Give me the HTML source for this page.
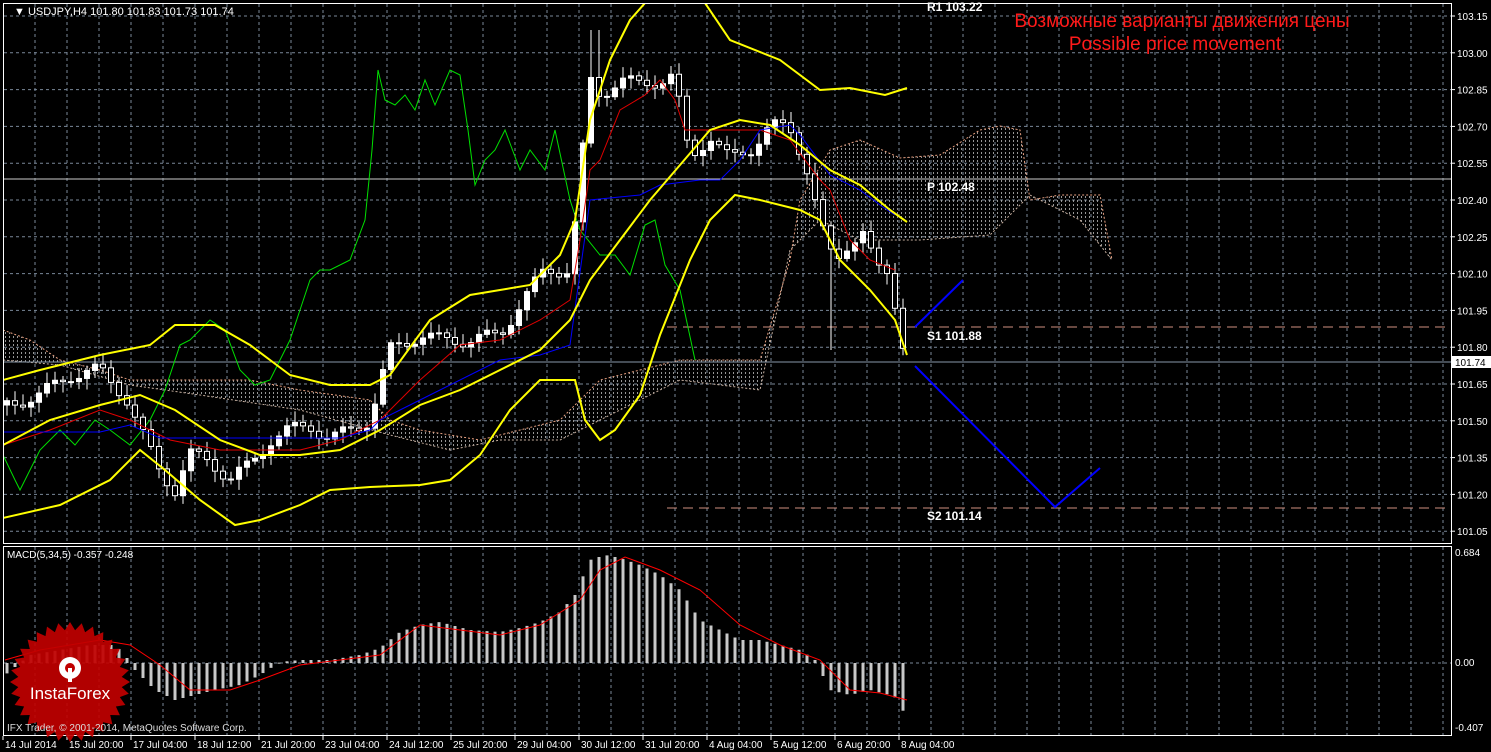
<!DOCTYPE html><html><head><meta charset="utf-8"><style>
html,body{margin:0;padding:0;background:#000;width:1491px;height:752px;overflow:hidden}
svg{display:block}
text{font-family:"Liberation Sans",sans-serif}
</style></head><body>
<svg id="s" width="1491" height="752" xmlns="http://www.w3.org/2000/svg">
<defs>
<pattern id="hatch" width="4" height="4" patternUnits="userSpaceOnUse"><rect x="1" y="0" width="1" height="2" fill="#bbb"/></pattern>
<clipPath id="mc"><rect x="4" y="4" width="1447" height="538"/></clipPath>
<clipPath id="dc"><rect x="4" y="547" width="1447" height="187"/></clipPath>
</defs>
<g id="grid"></g>
<g id="main" clip-path="url(#mc)"></g>
<g id="macd" clip-path="url(#dc)"></g>
<rect x="3.5" y="3.5" width="1448" height="540" fill="none" stroke="#fff"/>
<rect x="3.5" y="546.5" width="1448" height="189" fill="none" stroke="#fff"/>
<g id="axis" font-size="10" fill="#fff"></g>
<text x="14" y="15" font-size="11" fill="#fff">▼ USDJPY,H4  101.80 101.83 101.73 101.74</text>
<text x="7" y="558" font-size="10" fill="#fff">MACD(5,34,5) -0.357 -0.248</text>
<text x="1182" y="27" font-size="19" fill="#ff1a1a" text-anchor="middle">Возможные варианты движения цены</text>
<text x="1175" y="50" font-size="19" fill="#ff1a1a" text-anchor="middle">Possible price movement</text>
<g font-family="Liberation Mono,monospace" font-size="12" font-weight="bold" fill="#fff">
<text x="927" y="11" font-family="Liberation Mono,monospace">R1 103.22</text>
<text x="927" y="191" font-family="Liberation Mono,monospace">P 102.48</text>
<text x="927" y="340" font-family="Liberation Mono,monospace">S1 101.88</text>
<text x="927" y="520" font-family="Liberation Mono,monospace">S2 101.14</text>
</g>
<g id="logo">
<polygon id="star" fill="#c00000" opacity="0.92"/>
<g transform="translate(70,668)" fill="#fff">
<circle r="11"/><circle r="5" fill="#c00000"/>
<rect x="-2" y="0" width="4" height="14" fill="#fff"/>
</g>
<text x="70" y="699" font-size="17" fill="#fff" text-anchor="middle">InstaForex</text>
</g>
<text x="7" y="731" font-size="10" fill="#ddd">IFX Trader, © 2001-2014, MetaQuotes Software Corp.</text>
</svg>
<script>
var NS="http://www.w3.org/2000/svg";
function el(p,t,a){var e=document.createElementNS(NS,t);for(var k in a)e.setAttribute(k,a[k]);p.appendChild(e);return e;}
function I(k,x){if(x<=k[0][0])return k[0][1];for(var i=1;i<k.length;i++){if(x<=k[i][0]){var a=k[i-1],b=k[i];return a[1]+(b[1]-a[1])*(x-a[0])/(b[0]-a[0]);}}return k[k.length-1][1];}
function pl(p,k,c,w,d){el(p,"polyline",{points:k.map(function(q){return q.join(",")}).join(" "),fill:"none",stroke:c,"stroke-width":w||1,"stroke-dasharray":d||""});}
var G=document.getElementById("grid"),M=document.getElementById("main"),D=document.getElementById("macd"),A=document.getElementById("axis");
var gc="#7a8899";
for(var x=35;x<1450;x+=32){el(G,"line",{x1:x,y1:4,x2:x,y2:543,stroke:gc,"stroke-dasharray":"3,3"});el(G,"line",{x1:x,y1:547,x2:x,y2:735,stroke:gc,"stroke-dasharray":"3,3"});}
var pr=["103.15","103.00","102.85","102.70","102.55","102.40","102.25","102.10","101.95","101.80","101.65","101.50","101.35","101.20","101.05"];
for(var i=0;i<15;i++){var y=16+i*36.8;el(G,"line",{x1:4,y1:y,x2:1451,y2:y,stroke:gc,"stroke-dasharray":"3,3"});el(A,"line",{x1:1452,y1:y,x2:1455,y2:y,stroke:"#fff"});var t=el(A,"text",{x:1457,y:y+4});t.textContent=pr[i];}
el(G,"line",{x1:4,y1:663,x2:1451,y2:663,stroke:gc,"stroke-dasharray":"3,3"});
[["0.684",556],["0.00",666],["-0.407",731]].forEach(function(a){var t=el(A,"text",{x:1455,y:a[1]});t.textContent=a[0];});
el(A,"rect",{x:1452,y:356,width:39,height:12,fill:"#fff"});var t=el(A,"text",{x:1455,y:366,fill:"#000"});t.textContent="101.74";
var tl=["14 Jul 2014","15 Jul 20:00","17 Jul 04:00","18 Jul 12:00","21 Jul 20:00","23 Jul 04:00","24 Jul 12:00","25 Jul 20:00","29 Jul 04:00","30 Jul 12:00","31 Jul 20:00","4 Aug 04:00","5 Aug 12:00","6 Aug 20:00","8 Aug 04:00"];
tl.forEach(function(s,i){var x=3+64*i;el(A,"line",{x1:x,y1:736,x2:x,y2:740,stroke:"#fff"});var t=el(A,"text",{x:x+2,y:748});t.textContent=s;});
// cloud
var cu=[[3,330],[30,340],[60,360],[100,370],[130,380],[250,380],[300,390],[370,400],[390,420],[420,430],[480,440],[520,430],[560,420],[600,380],[640,370],[680,360],[760,360],[790,260],[800,200],[830,150],[860,140],[900,158],[940,155],[980,130],[1000,126],[1020,130],[1030,200],[1060,195],[1100,195],[1112,260]];
var cl=[[3,360],[60,365],[130,385],[200,395],[300,410],[390,435],[450,450],[500,440],[560,440],[600,420],[640,400],[680,380],[760,390],[790,250],[820,220],[860,240],[920,240],[990,235],[1030,195],[1080,220],[1112,260]];
el(M,"polygon",{points:cu.concat(cl.slice().reverse()).map(function(q){return q.join(",")}).join(" "),fill:"url(#hatch)",opacity:"0.8"});
pl(M,cu,"#e8a080",1,"2,2");pl(M,cl,"#c8b0a0",1,"2,2");
// levels
el(M,"line",{x1:4,y1:179,x2:1451,y2:179,stroke:"#ccc"});
el(M,"line",{x1:4,y1:362,x2:1451,y2:362,stroke:"#8899aa"});
el(M,"line",{x1:667,y1:327,x2:1451,y2:327,stroke:"#d09080","stroke-dasharray":"10,6"});
el(M,"line",{x1:667,y1:508,x2:1451,y2:508,stroke:"#d09080","stroke-dasharray":"10,6"});
// green
pl(M,[[3,455],[15,480],[20,490],[40,450],[60,430],[75,445],[95,420],[110,430],[130,445],[150,420],[165,390],[180,345],[190,340],[210,320],[225,330],[240,370],[255,385],[270,380],[290,340],[300,310],[310,280],[320,270],[330,270],[350,260],[365,220],[372,150],[378,70],[385,100],[395,105],[405,95],[415,110],[425,80],[435,105],[450,70],[460,75],[468,130],[475,185],[485,160],[495,150],[505,130],[520,170],[530,150],[545,170],[555,130],[570,200],[580,230],[600,255],[615,255],[630,275],[645,225],[655,220],[665,265],[680,290],[695,360]],"#00e000");
// candles
var ck=[[7,405],[40,395],[70,375],[100,370],[125,395],[140,430],[160,470],[175,490],[190,455],[210,460],[230,480],[250,465],[270,440],[290,430],[310,425],[330,440],[350,430],[370,420],[390,350],[420,335],[440,340],[470,340],[500,335],[520,305],[545,270],[570,270],[580,180],[590,80],[600,95],[620,80],[640,85],[660,80],[675,75],[680,110],[690,160],[710,135],[730,160],[750,150],[770,125],[790,130],[805,160],[815,200],[825,240],[835,265],[850,240],[865,230],[875,270],[890,275],[900,330],[907,358]];
var prev=I(ck,0);
for(var x=7;x<=907;x+=8){var c=I(ck,x)+Math.sin(x*1.7)*7;if(x==907)c=358;var o=prev;var hi=Math.min(o,c)-3-Math.abs(Math.sin(x*0.9))*8,lo=Math.max(o,c)+3+Math.abs(Math.cos(x*1.3))*8;
if(x>590&&x<600)hi=30;if(x>825&&x<835)lo=350;
el(M,"line",{x1:x,y1:hi,x2:x,y2:lo,stroke:"#fff"});
var up=c<o;el(M,"rect",{x:x-2.5,y:Math.min(o,c),width:5,height:Math.max(1,Math.abs(o-c)),fill:up?"#fff":"#000",stroke:"#fff","stroke-width":1});prev=c;}
// ichimoku lines
pl(M,[[3,445],[50,430],[100,410],[130,420],[170,440],[220,450],[300,450],[340,440],[380,420],[420,380],[460,345],[500,340],[540,320],[570,300],[580,240],[590,170],[600,160],[620,110],[645,95],[660,80],[675,100],[685,130],[740,130],[760,130],[790,140],[820,180],[830,190],[850,240],[870,260],[895,270]],"#e00000");
pl(M,[[3,432],[100,432],[130,425],[160,438],[340,438],[370,430],[380,420],[400,410],[430,395],[470,375],[500,360],[540,355],[570,345],[590,200],[640,195],[660,185],[700,180],[720,180],[740,160],[760,130],[790,125],[800,135],[830,175],[860,190],[880,205],[895,215]],"#0000ff");
// bollinger
var Y="#ffff00";
pl(M,[[3,380],[40,370],[100,355],[150,345],[175,325],[215,325],[250,345],[290,375],[330,385],[370,385],[390,375],[430,320],[470,295],[500,290],[530,285],[560,255],[575,220],[590,120],[610,60],[630,20],[645,3]],Y,2);
pl(M,[[705,3],[730,40],[780,60],[820,90],[850,88],[885,95],[907,88]],Y,2);
pl(M,[[3,445],[50,420],[100,405],[140,395],[175,410],[220,440],[260,455],[300,455],[340,450],[380,430],[420,405],[460,390],[500,370],[540,350],[570,320],[590,280],[620,240],[650,200],[680,165],[710,130],[740,120],[770,125],[800,145],[830,170],[860,185],[890,210],[907,222]],Y,2);
pl(M,[[3,518],[60,505],[110,480],[140,450],[165,470],[200,500],[235,525],[260,520],[300,505],[330,490],[370,487],[420,485],[450,480],[480,455],[510,410],[540,380],[575,380],[585,420],[600,440],[615,430],[640,395],[660,335],[690,260],[710,220],[735,195],[760,200],[800,210],[820,220],[840,260],[870,290],[895,320],[907,355]],Y,2);
// forecast
pl(M,[[915,327],[963,280]],"#0000ff",2);
pl(M,[[915,366],[1055,507],[1100,468]],"#0000ff",2);
// macd
var hk=[[5,675],[30,655],[60,650],[90,645],[115,645],[125,655],[135,670],[155,690],[175,700],[195,695],[215,690],[240,685],[260,675],[280,662],[300,660],[330,660],[360,655],[380,648],[400,632],[420,625],[440,622],[470,630],[500,632],[520,628],[540,622],[560,612],[575,595],[590,560],[605,555],[620,558],[640,565],[660,575],[680,590],[700,620],[720,630],[740,640],[760,640],[780,645],[800,650],[815,660],[830,690],[850,695],[870,690],[890,695],[900,700],[907,725]];
for(var x=7;x<=907;x+=8){var v=I(hk,x);el(D,"rect",{x:x-1.5,y:Math.min(v,663),width:3,height:Math.max(1,Math.abs(v-663)),fill:"#c8c8c8"});}
pl(D,[[5,660],[40,650],[100,640],[130,645],[160,665],[190,690],[230,690],[260,680],[300,665],[340,660],[380,655],[420,625],[460,630],[500,635],[540,625],[580,600],[600,570],[625,557],[660,570],[700,590],[740,625],[780,645],[820,660],[850,690],[880,693],[907,700]],"#ff0000");
// star
var pts=[];for(var i=0;i<64;i++){var r=i%2?52:60,a=i*Math.PI/32;pts.push((70+r*Math.cos(a)).toFixed(1)+","+(682+r*Math.sin(a)).toFixed(1));}
document.getElementById("star").setAttribute("points",pts.join(" "));
</script>
</body></html>
